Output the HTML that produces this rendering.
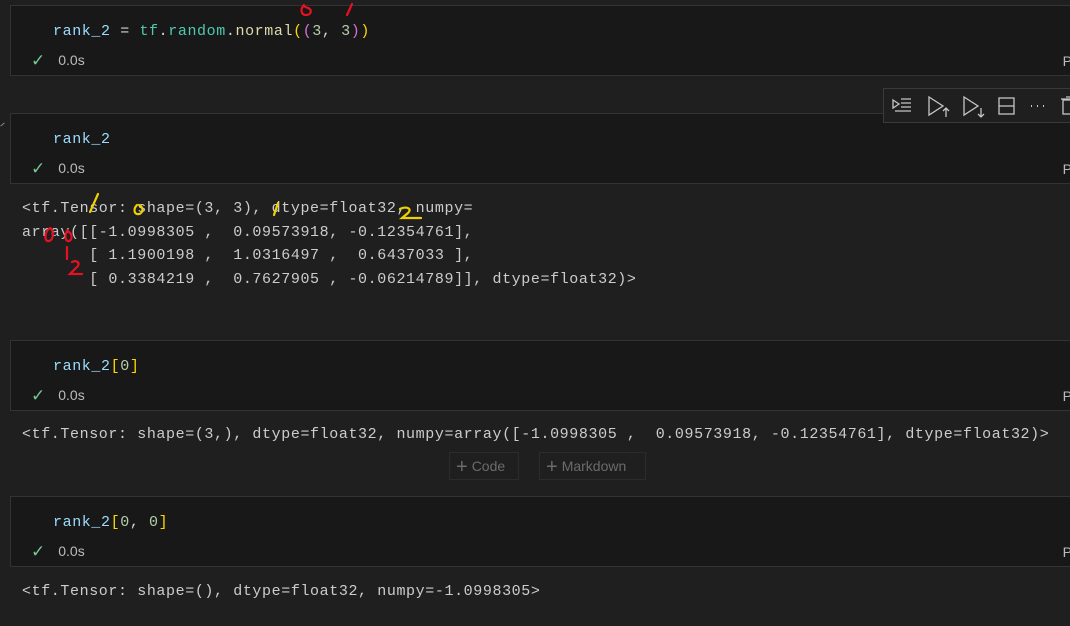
<!DOCTYPE html>
<html><head><meta charset="utf-8"><style>
*{margin:0;padding:0;box-sizing:border-box}
body{width:1070px;height:626px;background:#1f1f1f;overflow:hidden;position:relative;font-family:"Liberation Mono",monospace;}
.cell{position:absolute;left:10px;width:1080px;height:71px;background:#181818;border:1px solid #333;}
.code{position:absolute;left:42px;top:16px;font-size:15px;letter-spacing:0.6px;color:#9cdcfe;white-space:pre;line-height:20px}
.stat{position:absolute;left:20px;top:45px;font-family:"Liberation Sans",sans-serif;font-size:14px;color:#bbb;}
.stat b{color:#73c991;font-weight:normal;font-size:17px;margin-right:13px;vertical-align:-1px}
.p{position:absolute;right:12px;top:47px;font-family:"Liberation Sans",sans-serif;font-size:14px;color:#bbb}
.out{position:absolute;left:22px;font-size:15px;letter-spacing:0.6px;color:#cccccc;white-space:pre;line-height:23.5px}
.y{color:#ffd700}.m{color:#da70d6}.n{color:#b5cea8}.t{color:#4ec9b0}.f{color:#dcdcaa}.w{color:#d4d4d4}
.btn{position:absolute;top:452px;height:28px;border:1px solid #2c2c2c;color:#6b6b6b;font-family:"Liberation Sans",sans-serif;font-size:14px;line-height:26px;padding-left:6px}
.btn span{font-size:20px;vertical-align:-2px;margin-right:4px;font-weight:300}
</style></head><body>

<div class="cell" style="top:5px"><div class="code">rank_2 <span class="w">=</span> <span class="t">tf</span><span class="w">.</span><span class="t">random</span><span class="w">.</span><span class="f">normal</span><span class="y">(</span><span class="m">(</span><span class="n">3</span><span class="w">,</span> <span class="n">3</span><span class="m">)</span><span class="y">)</span></div><div class="stat"><b>✓</b>0.0s</div><div class="p" style="right:17px">P</div></div>

<div class="cell" style="top:113px"><div class="code">rank_2</div><div class="stat"><b>✓</b>0.0s</div><div class="p" style="right:17px">P</div></div>
<div style="position:absolute;left:0;top:124px;width:5px;height:1px;background:#888;transform:rotate(-40deg)"></div>

<div style="position:absolute;left:883px;top:88px;width:200px;height:35px;background:#1f1f1f;border:1px solid #3a3a3a"></div>
<svg style="position:absolute;left:883px;top:88px" width="190" height="35" fill="none" stroke="#c5c5c5" stroke-width="1.3">
<path d="M10 12 L16 16 L10 20 Z M18 11H28 M18 15H28 M18 19H28 M12 23H28"/>
<path d="M46 9 L60 18 L46 27 Z M63 29V20 M60 23 L63 20 L66 23" />
<path d="M81 9 L95 18 L81 27 Z M98 20V29 M95 26 L98 29 L101 26"/>
<rect x="116" y="10" width="15" height="16"/><path d="M116 18H131"/>
<path d="M148 18h1 M154 18h1 M160 18h1" stroke-width="2"/>
<rect x="180" y="12" width="10" height="14"/><path d="M178 11H192 M183 9H188"/>
</svg>

<div class="out" style="top:197px">&lt;tf.Tensor: shape=(3, 3), dtype=float32, numpy=
array([[-1.0998305 ,  0.09573918, -0.12354761],
       [ 1.1900198 ,  1.0316497 ,  0.6437033 ],
       [ 0.3384219 ,  0.7627905 , -0.06214789]], dtype=float32)&gt;</div>

<div class="cell" style="top:340px"><div class="code">rank_2<span class="y">[</span><span class="n">0</span><span class="y">]</span></div><div class="stat"><b>✓</b>0.0s</div><div class="p" style="right:17px">P</div></div>
<div class="out" style="top:423px">&lt;tf.Tensor: shape=(3,), dtype=float32, numpy=array([-1.0998305 ,  0.09573918, -0.12354761], dtype=float32)&gt;</div>
<div class="btn" style="left:449px;width:70px"><span>+</span>Code</div>
<div class="btn" style="left:539px;width:107px"><span>+</span>Markdown</div>

<div class="cell" style="top:496px"><div class="code">rank_2<span class="y">[</span><span class="n">0</span><span class="w">,</span> <span class="n">0</span><span class="y">]</span></div><div class="stat"><b>✓</b>0.0s</div><div class="p" style="right:17px">P</div></div>
<div class="out" style="top:580px">&lt;tf.Tensor: shape=(), dtype=float32, numpy=-1.0998305&gt;</div>

<svg style="position:absolute;left:0;top:0" width="1070" height="626" fill="none" stroke-width="2.2" stroke-linecap="round">
<g stroke="#e81123">
<path d="M304 5 C300 9 301 15 306 15 C312 15 312 9 308 8 C305 7 303 6 304 5"/>
<path d="M352 4 L347 15"/>
<path d="M50 228 C44 232 44 242 49 241 C54 240 54 230 50 228"/>
<path d="M68 230 C64 234 65 242 69 241 C73 240 72 232 68 232"/>
<path d="M67 247 V259"/>
<path d="M72 262 C76 260 80 262 78 266 L70 274 L82 274"/>
</g>
<g stroke="#f0d000">
<path d="M98 194 L90 212"/>
<path d="M137 205 C133 209 134 215 139 214 C144 213 143 206 139 205"/>
<path d="M278 203 L274 215"/>
<path d="M400 209 C405 206 413 208 408 213 L402 218 L421 218"/>
</g>
</svg>
</body></html>
